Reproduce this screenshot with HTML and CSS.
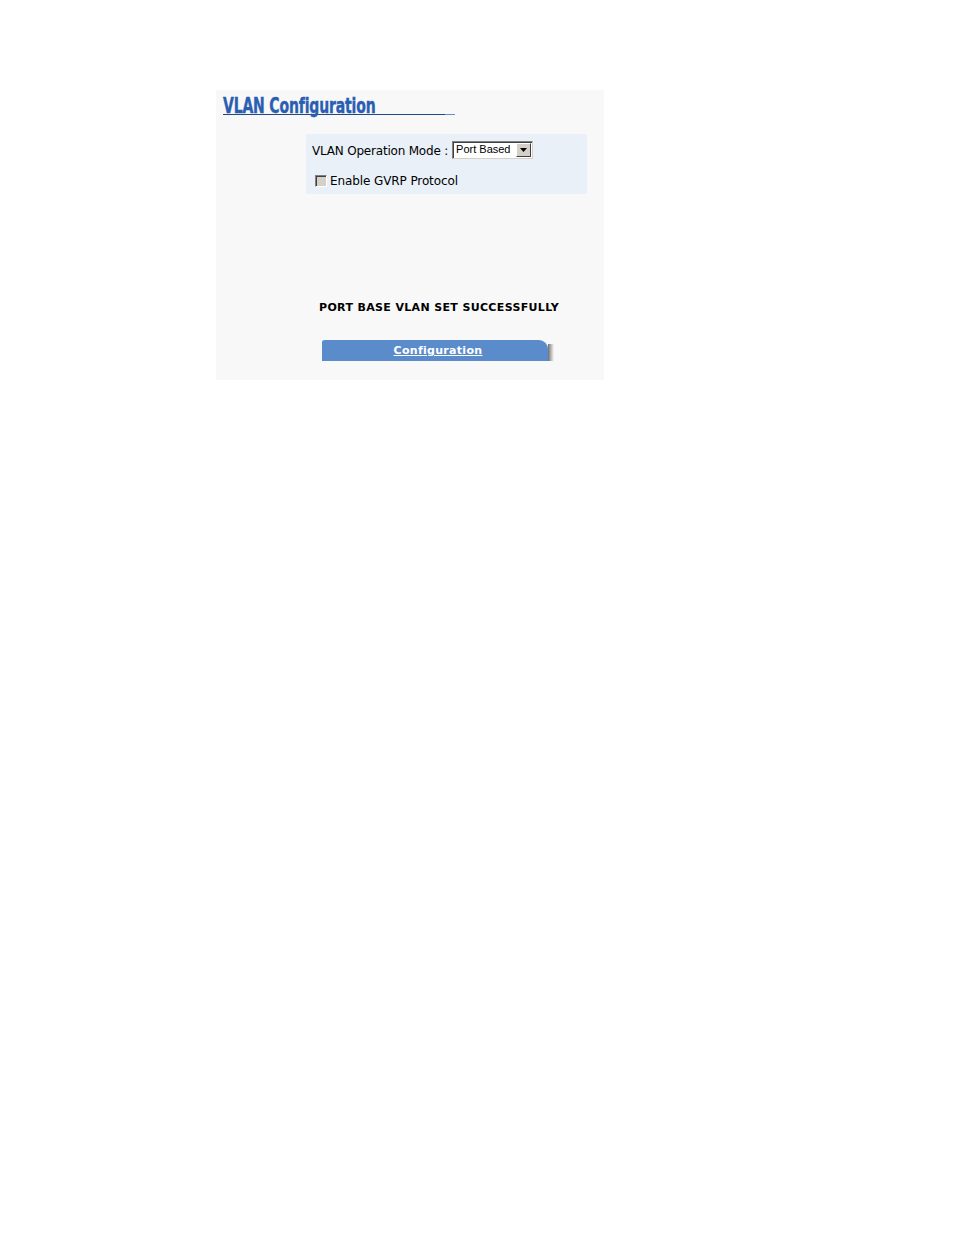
FILE: index.html
```html
<!DOCTYPE html>
<html>
<head>
<meta charset="utf-8">
<link rel="stylesheet" href="styles.css">
</head>
<body>
<div class="page">
  <div class="panel">
    <div class="title-wrap">
      <span class="title">VLAN Configuration</span>
      <span class="title-tail"></span>
    </div>
    <div class="box">
      <div class="row-mode">
        <span class="label">VLAN Operation Mode :</span>
        <span class="select"><span class="select-text">Port Based</span><span class="select-btn"><svg width="7" height="4" viewBox="0 0 7 4"><path d="M0 0H7L3.5 4Z" fill="#000"/></svg></span></span>
      </div>
      <div class="row-check">
        <span class="checkbox"></span>
        <span class="label">Enable GVRP Protocol</span>
      </div>
    </div>
    <div class="message">PORT BASE VLAN SET SUCCESSFULLY</div>
    <div class="btn-row">
      <div class="btn"><a class="btn-link">Configuration</a></div>
      <div class="btn-shadow"></div>
    </div>
  </div>
</div>
</body>
</html>
```
FILE: styles.css
```css
html, body {
  margin: 0;
  padding: 0;
  background: #ffffff;
}
.page {
  padding-top: 90px;
  padding-left: 216px;
}
.panel {
  width: 388px;
  height: 290px;
  background: #f8f8f8;
  box-sizing: border-box;
  padding-top: 5px;
  font-family: "DejaVu Sans", Verdana, sans-serif;
}
.title-wrap {
  margin-left: 7px;
  width: 232px;
  height: 19px;
  border-bottom: 1px solid #1f4a86;
  display: flex;
  align-items: flex-end;
  position: relative;
}
.title-tail {
  position: absolute;
  right: 0;
  bottom: -1px;
  width: 10px;
  height: 1px;
  background: #5b8fd0;
}
.title {
  display: inline-block;
  font-family: "DejaVu Sans Condensed", "DejaVu Sans", sans-serif;
  font-weight: bold;
  font-size: 21px;
  line-height: 20px;
  color: #2a5eb2;
  transform: scaleX(0.74);
  transform-origin: left bottom;
  white-space: nowrap;
  letter-spacing: -0.2px;
  margin-bottom: -2px;
  -webkit-text-stroke: 0.4px #2a5eb2;
}
.box {
  margin-left: 90px;
  margin-top: 19px;
  width: 281px;
  height: 60px;
  background: #eaf0f8;
  box-sizing: border-box;
  padding-top: 7px;
  padding-left: 6px;
}
.label {
  font-size: 12px;
  color: #000;
  letter-spacing: -0.2px;
}
.row-mode {
  display: flex;
  align-items: center;
  height: 18px;
  gap: 4px;
}
.row-mode .label {
  position: relative;
  top: 1px;
}
.select {
  display: inline-flex;
  align-items: stretch;
  width: 81px;
  height: 18px;
  box-sizing: border-box;
  border-top: 1px solid #808080;
  border-left: 1px solid #808080;
  border-right: 1px solid #d4d0c8;
  border-bottom: 1px solid #d4d0c8;
  background: #fff;
  box-shadow: inset 1px 1px 0 #404040;
}
.select-text {
  flex: 1;
  font-family: "Liberation Sans", Arial, sans-serif;
  font-size: 11px;
  line-height: 15px;
  padding-left: 3px;
  color: #000;
}
.select-btn {
  width: 15px;
  margin: 1px 1px 1px 0;
  background: #d4d0c8;
  box-sizing: border-box;
  border-top: 1px solid #fff;
  border-left: 1px solid #fff;
  border-right: 1px solid #404040;
  border-bottom: 1px solid #404040;
  display: flex;
  align-items: center;
  justify-content: center;
}
.row-check {
  display: flex;
  align-items: center;
  margin-top: 15px;
  margin-left: 3px;
  gap: 3px;
}
.row-check .label {
  letter-spacing: -0.1px;
}
.checkbox {
  width: 12px;
  height: 12px;
  box-sizing: border-box;
  background: #d4d0c8;
  border-top: 1px solid #808080;
  border-left: 1px solid #808080;
  border-right: 1px solid #fff;
  border-bottom: 1px solid #fff;
  box-shadow: inset 1px 1px 0 #404040;
}
.message {
  margin-top: 107px;
  margin-left: 103px;
  font-weight: bold;
  font-size: 11px;
  line-height: 14px;
  color: #000;
  letter-spacing: 0.35px;
  white-space: nowrap;
}
.btn-row {
  margin-top: 25px;
  margin-left: 106px;
  display: flex;
  align-items: stretch;
  height: 21px;
}
.btn {
  width: 226px;
  background: #5a8bcb;
  border-top-right-radius: 9px;
  border-top-left-radius: 3px 2px;
  display: flex;
  align-items: center;
  justify-content: center;
}
.btn-link {
  color: #ffffff;
  font-weight: bold;
  font-size: 11px;
  text-decoration: underline;
  letter-spacing: 0.3px;
  margin-left: 6px;
}
.btn-shadow {
  width: 6px;
  margin-top: 4px;
  background: linear-gradient(to right, #6e6e6e, #b0b0b0 45%, #f8f8f8);
}
```
